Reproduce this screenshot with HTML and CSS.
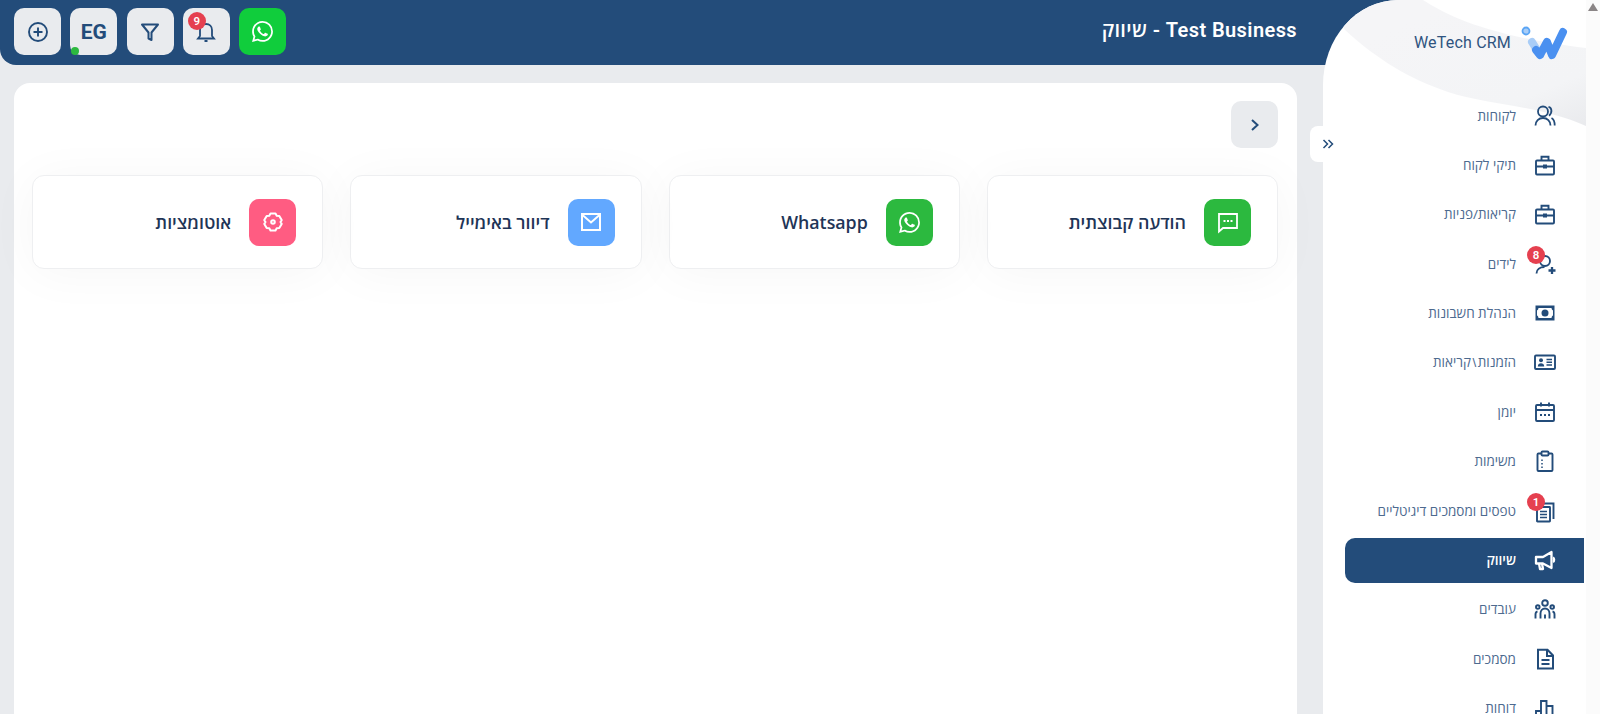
FILE: index.html
```html
<!DOCTYPE html>
<html lang="he" dir="rtl">
<head>
<meta charset="utf-8">
<title>WeTech CRM</title>
<link rel="stylesheet" href="styles.css">
</head>
<body>
<svg class="sprite" xmlns="http://www.w3.org/2000/svg"><symbol id="wa" viewBox="0 0 24 24"><path fill="currentColor" d="M17.472 14.382c-.297-.149-1.758-.867-2.03-.967-.273-.099-.471-.148-.67.15-.197.297-.767.966-.94 1.164-.173.199-.347.223-.644.075-.297-.15-1.255-.463-2.39-1.475-.883-.788-1.48-1.761-1.653-2.059-.173-.297-.018-.458.13-.606.134-.133.298-.347.446-.52.149-.174.198-.298.298-.497.099-.198.05-.371-.025-.52-.075-.149-.669-1.612-.916-2.207-.242-.579-.487-.5-.669-.51-.173-.008-.371-.01-.57-.01-.198 0-.52.074-.792.372-.272.297-1.04 1.016-1.04 2.479 0 1.462 1.065 2.875 1.213 3.074.149.198 2.096 3.2 5.077 4.487.709.306 1.262.489 1.694.625.712.227 1.36.195 1.871.118.571-.085 1.758-.719 2.006-1.413.248-.694.248-1.289.173-1.413-.074-.124-.272-.198-.57-.347m-5.421 7.403h-.004a9.87 9.87 0 01-5.031-1.378l-.361-.214-3.741.982.998-3.648-.235-.374a9.86 9.86 0 01-1.51-5.26c.001-5.45 4.436-9.884 9.888-9.884 2.64 0 5.122 1.03 6.988 2.898a9.825 9.825 0 012.893 6.994c-.003 5.45-4.437 9.884-9.885 9.884m8.413-18.297A11.815 11.815 0 0012.05 0C5.495 0 .16 5.335.157 11.892c0 2.096.547 4.142 1.588 5.945L.057 24l6.305-1.654a11.882 11.882 0 005.683 1.448h.005c6.554 0 11.89-5.335 11.893-11.893a11.821 11.821 0 00-3.48-8.413Z"/></symbol><symbol id="case" viewBox="0 0 24 24"><g fill="none" stroke="currentColor" stroke-width="1.900"><rect x="3" y="7.500" width="18" height="14" rx="1"/><path d="M8.500 7.500V3.800h7V7.500M3 13.500h18"/></g><rect x="10" y="11.500" width="4" height="4" fill="currentColor"/></symbol></svg>

<div class="app">
  <div class="scrollbar"><span class="scroll-up"></span></div>

  <aside class="side-wrap">
    <div class="sidebar">
      <svg class="wave" viewBox="0 0 263 130" width="263" height="130" aria-hidden="true">
        <defs><linearGradient id="waveFill" x1="0.3" y1="0.2" x2="1" y2="1"><stop offset="0" stop-color="#f5f5f7"/><stop offset="0.7" stop-color="#f3f4f6"/><stop offset="1" stop-color="#e9eaed"/></linearGradient></defs>
        <path fill="url(#waveFill)" d="M100 0C125 16 165 36 263 48V126C215 105 165 105 125 92C85 78 55 60 22 30L0 0Z"/>
      </svg>
      <button class="collapse" type="button" aria-label="כיווץ">
        <svg viewBox="0 0 12 12" width="12" height="12"><path d="M1.500 2l4 4-4 4M6.500 2l4 4-4 4" fill="none" stroke="#234c7a" stroke-width="1.500"/></svg>
      </button>
      <div class="brand">
        <svg class="brand-logo" viewBox="0 0 48 36" width="48" height="36" aria-hidden="true">
          <circle cx="6" cy="7" r="3.500" fill="#a9cdf7" stroke="#5aa5f5" stroke-width="1.800"/>
          <path d="M12 18L20 31" fill="none" stroke="#a9cdf7" stroke-width="8" stroke-linecap="round"/>
          <path d="M16 26L20 31L27 18L32 31L43 8" fill="none" stroke="#4a90f0" stroke-width="8" stroke-linecap="round" stroke-linejoin="round"/>
        </svg>
        <span class="brand-name" dir="ltr">WeTech CRM</span>
      </div>
      <nav class="nav">
        <a class="nav-item"><span class="nav-icon"><svg viewBox="0 0 24 24" width="24" height="24" fill="none" stroke="currentColor" stroke-width="1.800"><circle cx="10" cy="7.500" r="5"/><path d="M2.500 21.500c0-4.500 3.200-7.500 7.500-7.500s7.500 3 7.500 7.500M15.500 2.800c3 .6 4.500 5.500.5 8.900M18.500 14c2 1 3.200 4 3.200 7.500"/></svg></span><span>לקוחות</span></a>
        <a class="nav-item"><span class="nav-icon"><svg width="24" height="24"><use href="#case"/></svg></span><span>תיקי לקוח</span></a>
        <a class="nav-item"><span class="nav-icon"><svg width="24" height="24"><use href="#case"/></svg></span><span>קריאות/פניות</span></a>
        <a class="nav-item"><span class="nav-icon"><svg viewBox="0 0 24 24" width="24" height="24" fill="none" stroke="currentColor" stroke-width="1.900"><circle cx="12" cy="9" r="5"/><path d="M3.500 21.500c0-4 3.500-6.500 8-6.500"/><path d="M15.500 18.500h7M19 15v7" stroke-width="2.300"/></svg><span class="badge">8</span></span><span>לידים</span></a>
        <a class="nav-item"><span class="nav-icon"><svg viewBox="0 0 24 24" width="24" height="24"><path fill="currentColor" d="M2.500 4.500h19v15h-19z"/><path fill="#fff" d="M5.500 7h13c.2 1.500.8 2.100 1.500 2.400v5.200c-.7.300-1.300.900-1.500 2.400h-13c-.2-1.500-.8-2.100-1.500-2.400V9.400C4.700 9.100 5.300 8.500 5.500 7z"/><circle cx="12" cy="12" r="3.500" fill="currentColor"/></svg></span><span>הנהלת חשבונות</span></a>
        <a class="nav-item"><span class="nav-icon"><svg viewBox="0 0 24 24" width="24" height="24"><rect x="2" y="5.500" width="20" height="13.500" rx="1" fill="none" stroke="currentColor" stroke-width="1.900"/><circle cx="8" cy="10.300" r="2" fill="currentColor"/><path fill="currentColor" d="M4.800 16.500c0-2.200 1.500-3.300 3.200-3.300s3.200 1.100 3.200 3.300z"/><path d="M13.500 9.500h5.500M13.500 12.300h5.500M13.500 15h5.500" stroke="currentColor" stroke-width="1.500"/></svg></span><span>הזמנות<span class="sep">&#92;</span>קריאות</span></a>
        <a class="nav-item"><span class="nav-icon"><svg viewBox="0 0 24 24" width="24" height="24" fill="none" stroke="currentColor" stroke-width="1.900"><rect x="3" y="5" width="18" height="16" rx="1"/><path d="M3 10h18M8 2.500v4M16 2.500v4"/><path d="M7 15h2M11 15h2M15 15h2" stroke-width="2"/></svg></span><span>יומן</span></a>
        <a class="nav-item"><span class="nav-icon"><svg viewBox="0 0 24 24" width="24" height="24" fill="none" stroke="currentColor" stroke-width="1.900"><rect x="4.500" y="4.500" width="15" height="17.500" rx="1"/><rect x="8.500" y="2.500" width="7" height="4" rx="1" fill="#fff"/><path d="M9 10.500v1.500M9 14v1.500M9 17.500v1.500" stroke-width="1.500"/></svg></span><span>משימות</span></a>
        <a class="nav-item"><span class="nav-icon"><svg viewBox="0 0 24 24" width="24" height="24" fill="none" stroke="currentColor" stroke-width="1.900"><path d="M9 4.500h11.500v15.500"/><rect x="4" y="8" width="13" height="14.500" rx=".5"/><path d="M7 12.500h7M7 15.500h7M7 18.500h7" stroke-width="1.500"/></svg><span class="badge">1</span></span><span>טפסים ומסמכים דיגיטליים</span></a>
        <a class="nav-item is-active"><span class="nav-icon"><svg viewBox="0 0 24 24" width="24" height="24" fill="none" stroke="currentColor" stroke-width="2.300" stroke-linejoin="round"><path d="M3 9h7l8.500-5v16L10 15.500H3z"/><path d="M6 15.500l1 5.500h3l-1-5.500M20 9.500c1.500.5 1.500 4 0 4.500"/></svg></span><span>שיווק</span></a>
        <a class="nav-item"><span class="nav-icon"><svg viewBox="0 0 24 24" width="24" height="24" fill="none" stroke="currentColor" stroke-width="1.900"><circle cx="12" cy="6" r="2.800"/><circle cx="4.800" cy="10" r="1.800"/><circle cx="19.200" cy="10" r="1.800"/><path d="M7.500 21.500v-5c0-3 2-5 4.500-5s4.500 2 4.500 5v5M12 21.500v-4M2.500 21.500v-4c0-1.500.8-2.800 2-3M21.500 21.500v-4c0-1.500-.8-2.800-2-3"/></svg></span><span>עובדים</span></a>
        <a class="nav-item"><span class="nav-icon"><svg viewBox="0 0 24 24" width="24" height="24" fill="none" stroke="currentColor" stroke-width="2"><path d="M5 2.800h9.500L20 8.500v13H5z"/><path d="M14 3v6h6M8.500 13h8M8.500 17h8" /></svg></span><span>מסמכים</span></a>
        <a class="nav-item"><span class="nav-icon"><svg viewBox="0 0 24 24" width="24" height="24" fill="none" stroke="currentColor" stroke-width="1.900"><path d="M3 22v-7h5V22M8 22V5h5.500v17M13.500 22V10h6v12"/></svg></span><span>דוחות</span></a>
      </nav>
    </div>
  </aside>

  <div class="content">
    <header class="topbar">
      <h1 class="title">Test Business - שיווק</h1>
      <div class="actions">
        <button class="tool tool-wa" type="button"><svg width="21" height="21"><use href="#wa"/></svg></button>
        <button class="tool" type="button"><svg viewBox="0 0 24 24" width="24" height="24" fill="none" stroke="currentColor" stroke-width="1.800"><path d="M12 4c-3.500 0-6 2.500-6 6v6l-2 2.500h16L18 16v-6c0-3.500-2.500-6-6-6zM10.500 21h3"/></svg><span class="badge badge-bell">9</span></button>
        <button class="tool" type="button"><svg viewBox="0 0 24 24" width="24" height="24" fill="none" stroke="currentColor" stroke-width="2" stroke-linejoin="round"><path d="M4 4.500h16l-6.500 8V20l-3-1.500v-6z"/></svg></button>
        <button class="tool tool-user" type="button">EG<span class="online"></span></button>
        <button class="tool" type="button"><svg viewBox="0 0 24 24" width="24" height="24" fill="none" stroke="currentColor" stroke-width="1.900"><circle cx="12" cy="12" r="9"/><path d="M12 7.500v9M7.500 12h9"/></svg></button>
      </div>
    </header>

    <main class="panel">
      <button class="back" type="button" aria-label="חזרה"><svg viewBox="0 0 12 14" width="12" height="14"><path d="M3 2l5.500 5L3 12" fill="none" stroke="#234c7a" stroke-width="2"/></svg></button>
      <section class="cards">
        <a class="card"><span class="card-icon green"><svg viewBox="0 0 24 24" width="24" height="24" fill="none" stroke="#fff" stroke-width="1.800"><path d="M3 4h18v14H7l-4 3.500z"/><path d="M7.500 11h2M11 11h2M14.500 11h2" stroke-width="2"/></svg></span><span class="card-label">הודעה קבוצתית</span></a>
        <a class="card"><span class="card-icon green"><svg width="21" height="21"><use href="#wa"/></svg></span><span class="card-label">Whatsapp</span></a>
        <a class="card"><span class="card-icon blue"><svg viewBox="0 0 24 24" width="24" height="24" fill="none" stroke="#fff" stroke-width="2"><rect x="3" y="4" width="18" height="16"/><path d="M3.500 5l8.500 7.500L20.500 5"/></svg></span><span class="card-label">דיוור באימייל</span></a>
        <a class="card"><span class="card-icon pink"><svg viewBox="0 0 24 24" width="24" height="24" fill="none" stroke="#fff" stroke-width="2" stroke-linejoin="round"><path d="M9.500 3.500h5l1.200 2.300 2.600.1 2.400 4.200L19.500 12l1.200 1.900-2.400 4.200-2.600.1-1.200 2.300h-5l-1.200-2.300-2.600-.1-2.400-4.200L4.500 12l-1.200-1.900 2.400-4.200 2.600-.1z"/><circle cx="12" cy="12" r="1.800"/></svg></span><span class="card-label">אוטומציות</span></a>
      </section>
    </main>
  </div>
</div>
</body>
</html>
```

FILE: styles.css
```css
* { box-sizing: border-box; }
html, body { margin: 0; height: 100%; overflow: hidden; }
body { font-family: "Open Sans", "Liberation Sans", "DejaVu Sans", sans-serif; color: #234c7a; background: #e9ebee; }
button { font: inherit; border: 0; padding: 0; cursor: pointer; }
.sprite { display: none; }

.app { display: flex; height: 714px; }

.scrollbar { flex: 0 0 14px; background: #fbfbfb; padding: 3px 2px 0; }
.scroll-up { display: block; width: 0; margin: 0 auto; border-left: 5px solid transparent; border-right: 5px solid transparent; border-bottom: 8px solid #8a8586; }

.side-wrap { flex: 0 0 263px; background: linear-gradient(#234c7a 65px, #e9ebee 65px); }
.sidebar { position: relative; height: 100%; padding-top: 24px; background: #fff; border-top-left-radius: 75px 85px; }
.wave { position: absolute; top: 0; right: 0; border-top-left-radius: 75px 85px; }
.collapse { position: absolute; top: 126px; right: 249px; width: 27px; height: 36px; padding-left: 9px; background: #fff; border-radius: 8px 0 0 8px; display: flex; align-items: center; justify-content: center; }

.brand { position: relative; display: flex; align-items: center; gap: 9px; height: 36px; padding-right: 18px; }
.brand-name { font-family: Roboto, "Liberation Sans", sans-serif; font-size: 16px; color: #2f5480; letter-spacing: .2px; }

.nav { position: relative; display: flex; flex-direction: column; gap: 4.400px; margin-top: 33px; padding-right: 2px; }
.nav-item { flex: 0 0 45px; display: flex; align-items: center; gap: 14px; margin-left: 22px; padding-right: 24px; font-size: 13.500px; color: #4d6a8f; border-radius: 10px 0 0 10px; }
.nav-item.is-active { background: #234c7a; color: #fff; font-weight: 600; }
.nav-icon { position: relative; flex: 0 0 30px; height: 24px; display: flex; justify-content: center; color: #234c7a; }
.is-active .nav-icon { color: #fff; }
.sep { font-family: "Liberation Sans", sans-serif; margin: 0 1.500px; }

.badge { position: absolute; top: -6px; right: 15px; width: 18px; height: 18px; border-radius: 50%; background: #e5404f; color: #fff; font-size: 11.500px; font-weight: 600; line-height: 18px; text-align: center; font-family: Roboto, sans-serif; }

.content { flex: 1; min-width: 0; display: flex; flex-direction: column; }
.topbar { flex: 0 0 65px; display: flex; justify-content: space-between; align-items: flex-start; padding: 8px 26px 0 14px; background: #234c7a; border-bottom-left-radius: 16px; }
.title { margin: 9px 0 0; font-size: 20px; font-weight: 600; line-height: 26px; color: #fff; font-family: Roboto, "Open Sans", sans-serif; letter-spacing: .4px; }
.actions { display: flex; gap: 9.300px; }
.tool { position: relative; width: 47px; height: 47px; border-radius: 10px; background: #e9ebee; color: #234c7a; display: flex; align-items: center; justify-content: center; }
.tool-wa { background: #10cd3c; color: #fff; }
.tool-user { font-family: Roboto, sans-serif; font-size: 21px; font-weight: 700; }
.badge-bell { top: 4px; right: 24px; }
.online { position: absolute; bottom: 0; left: 1px; width: 8px; height: 8px; border-radius: 50%; background: #2cb93f; }

.panel { flex: 1; margin: 18px 26px 0 14px; padding: 18px 19px 0 18px; background: #fff; border-radius: 16px 16px 0 0; }
.back { display: flex; align-items: center; justify-content: center; width: 47px; height: 47px; border-radius: 10px; background: #e9ebee; }
.cards { display: grid; grid-template-columns: repeat(4, 1fr); gap: 27px; margin-top: 27px; }
.card { display: flex; align-items: center; gap: 18px; height: 94px; padding-right: 26px; background: #fff; border: 1px solid #eeeff1; border-radius: 12px; box-shadow: 0 4px 50px rgba(0, 0, 0, .04); }
.card-icon { flex: 0 0 47px; height: 47px; border-radius: 10px; display: flex; align-items: center; justify-content: center; color: #fff; }
.green { background: #2cb93f; }
.blue { background: #62a8ff; }
.pink { background: #ff5c82; }
.card-label { font-size: 17.800px; font-weight: 600; color: #1f3557; }
```
